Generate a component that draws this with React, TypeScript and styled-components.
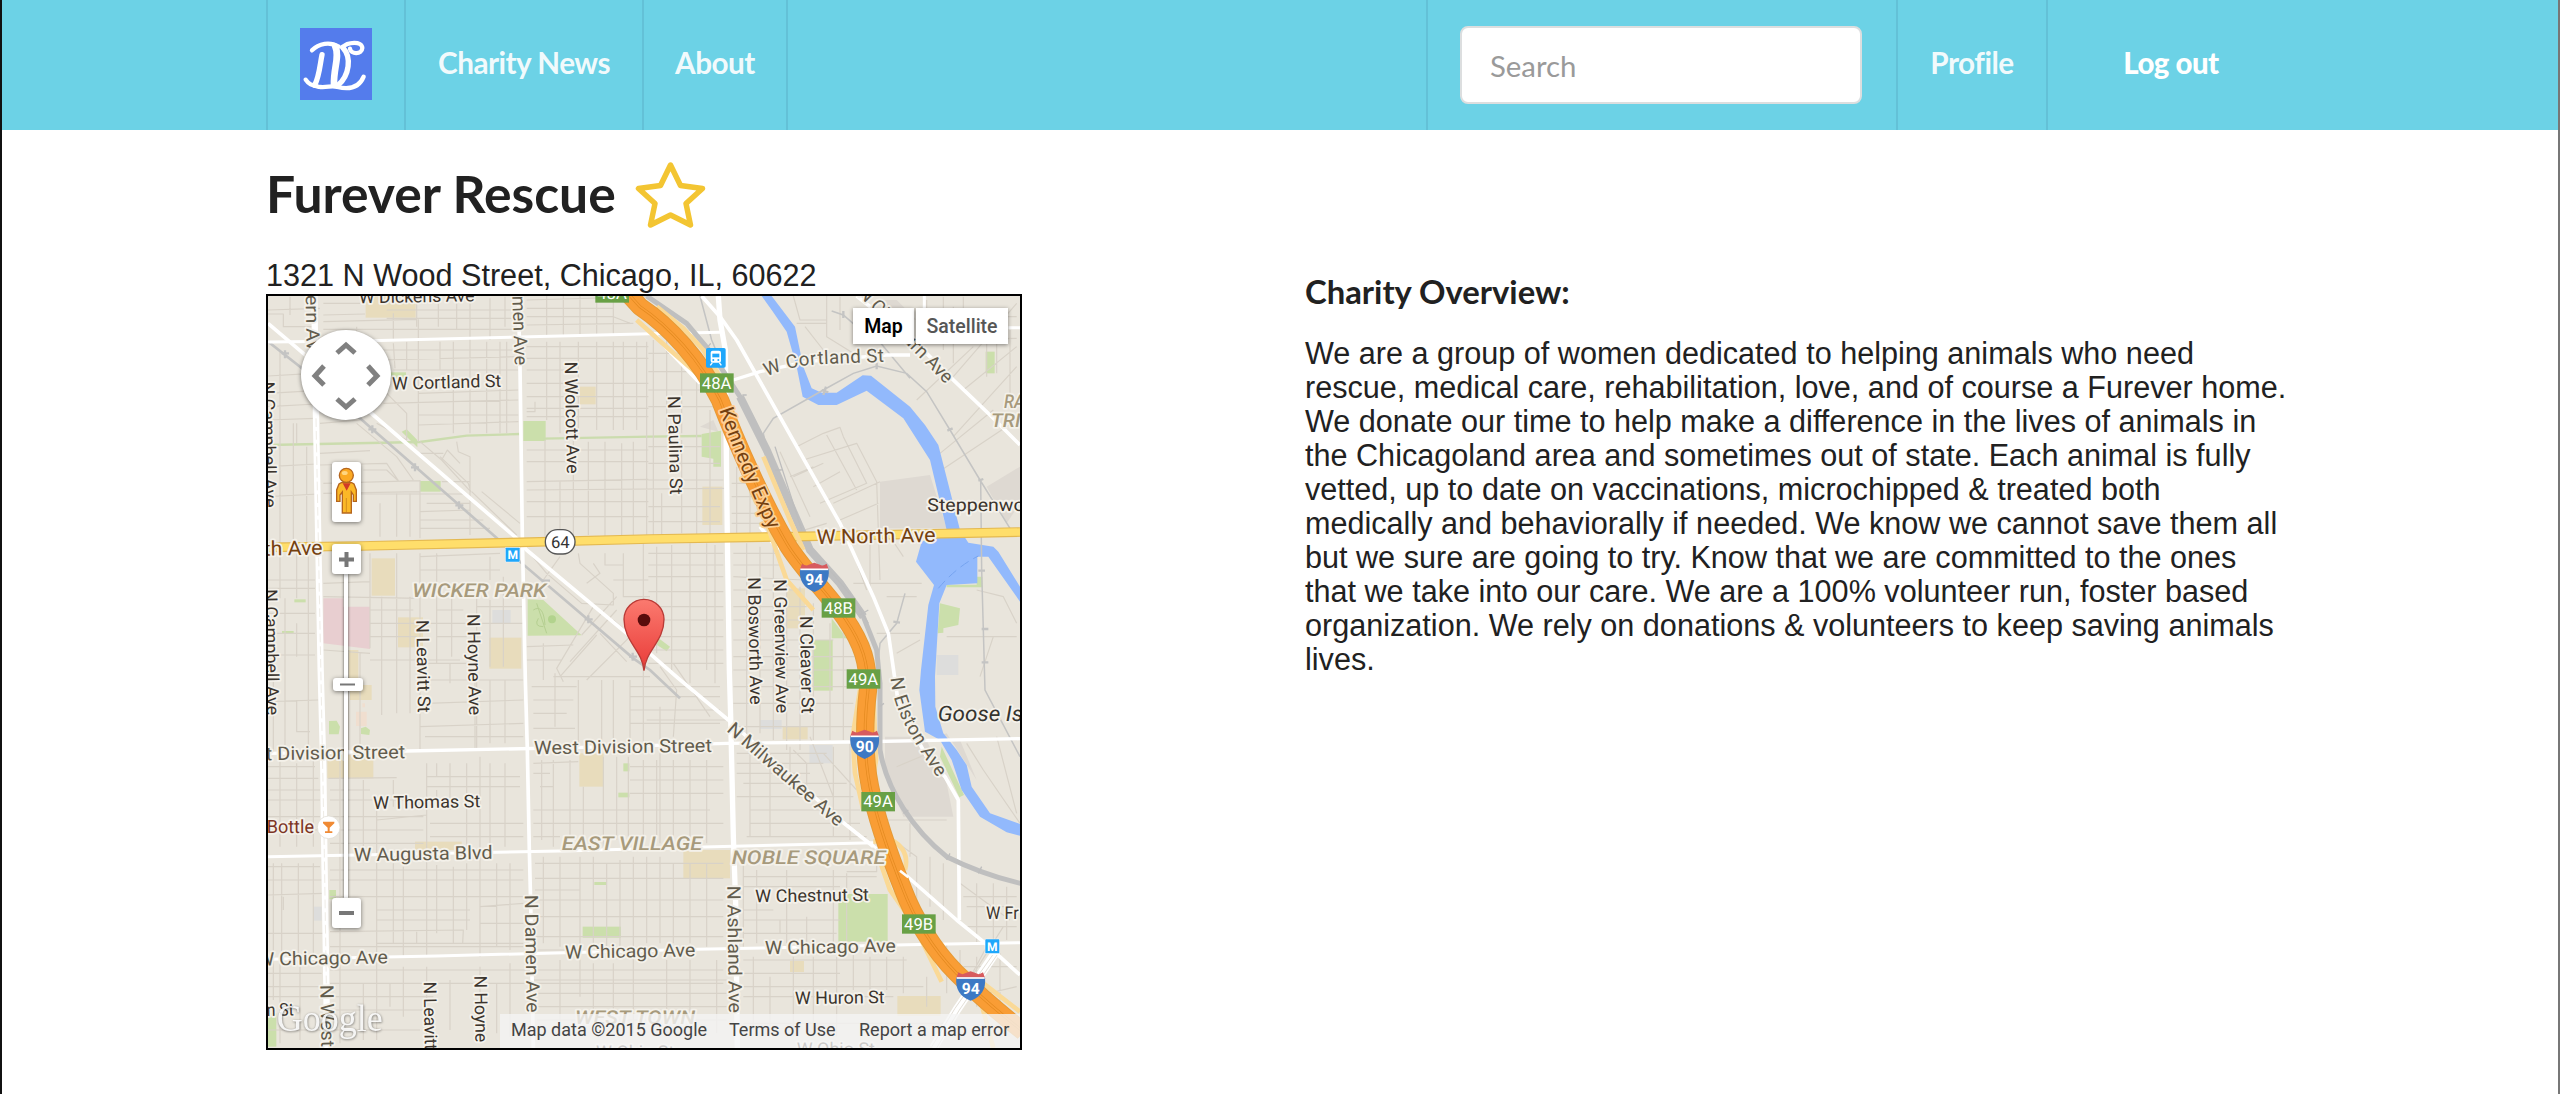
import React from 'react';
import styled, { createGlobalStyle } from 'styled-components';

const GlobalStyle = createGlobalStyle`
  * { box-sizing: border-box; }
  html, body { margin: 0; padding: 0; background: #fff; }
`;

const sans = `"Liberation Sans", Arial, sans-serif`;
const lato = `Lato, "Liberation Sans", sans-serif`;
const roboto = `Roboto, "Liberation Sans", sans-serif`;

const Page = styled.div`
  width: 2560px;
  height: 1094px;
  overflow: hidden;
  border-left: 2px solid #111;
  border-right: 2px solid #777;
  background: #fff;
  color: #212121;
`;
const NavBar = styled.nav`
  height: 130px;
  background: #6cd2e6;
  padding-left: 264px;
  display: flex;
  font-family: ${lato};
`;
const NavItem = styled.a<{ $w: number; $pad?: number; $bold?: boolean; $line?: 'left' | 'both' }>`
  width: ${p => p.$w}px;
  height: 130px;
  padding-bottom: ${p => p.$pad ?? 6}px;
  display: flex;
  align-items: center;
  justify-content: center;
  color: ${p => (p.$bold ? '#fff' : 'rgba(255,255,255,.92)')};
  font-size: ${p => (p.$bold ? 29.4 : 29.7)}px;
  font-weight: ${p => (p.$bold ? 900 : 700)};
  letter-spacing: -0.5px;
  white-space: nowrap;
  border-left: ${p => (p.$line ? '2px solid #63c1d7' : '0')};
  border-right: ${p => (p.$line === 'both' ? '2px solid #63c1d7' : '0')};
`;
const Spacer = styled.div`
  width: 638px;
`;
const SearchCell = styled.div`
  width: 470px;
  padding: 26px 0 0 32px;
  border-left: 2px solid #63c1d7;
`;
const SearchInput = styled.input`
  display: block;
  width: 402px;
  height: 78px;
  border: 2px solid #dcdedf;
  border-radius: 8px;
  padding: 0 28px;
  font-family: ${lato};
  font-size: 29.4px;
  background: #fff;
  outline: none;
  &::placeholder { color: #9a9a9a; opacity: 1; }
`;
const Content = styled.main`
  display: flex;
  padding-left: 264px;
`;
const LeftColumn = styled.section`
  width: 1039px;
`;
const RightColumn = styled.section`
  width: 1000px;
  padding-top: 142px;
`;
const TitleRow = styled.div`
  height: 128px;
  display: flex;
  padding-top: 31px;
`;
const Title = styled.h1`
  margin: 0;
  width: 369px;
  font: 700 51.6px/64px ${lato};
  letter-spacing: 0;
  white-space: nowrap;
`;
const Address = styled.div`
  height: 36px;
  font: 30.6px/34px ${sans};
  white-space: nowrap;
`;
const OverviewTitle = styled.h3`
  margin: 0 0 23px;
  font: 700 32.8px/40px ${lato};
`;
const Overview = styled.p`
  margin: 0;
  padding-top: 1px;
  font: 30.6px/34px ${sans};
  white-space: nowrap;
`;
const MapBox = styled.div`
  position: relative;
  width: 756px;
  height: 756px;
  border: 2px solid #000;
  overflow: hidden;
  background: #e9e5dc;
  font-family: ${roboto};
  & > svg:first-child { display: block; }
`;
const MapTypeBar = styled.div`
  position: absolute;
  right: 12px;
  top: 12px;
  display: flex;
  gap: 2px;
`;
const MapType = styled.button<{ $w: number; $active?: boolean }>`
  width: ${p => p.$w}px;
  height: 36px;
  padding: 1px 0 0;
  border: 0;
  background: #fff;
  box-shadow: 0 1px 4px rgba(0, 0, 0, 0.45);
  font: ${p => (p.$active ? 600 : 500)} 19.5px ${roboto};
  color: ${p => (p.$active ? '#000' : '#565656')};
`;
const PanPad = styled.div`
  position: absolute;
  left: 33px;
  top: 34px;
  width: 90px;
  height: 90px;
  border-radius: 50%;
  background: #fff;
  box-shadow: 0 1px 4px rgba(0, 0, 0, 0.5);
`;
const ControlBox = styled.div<{ $x: number; $y: number; $w: number; $h: number }>`
  position: absolute;
  left: ${p => p.$x}px;
  top: ${p => p.$y}px;
  width: ${p => p.$w}px;
  height: ${p => p.$h}px;
  border-radius: 3px;
  background: #fff;
  box-shadow: 0 1px 4px rgba(0, 0, 0, 0.5);
  display: flex;
  align-items: center;
  justify-content: center;
`;
const Track = styled.div`
  position: absolute;
  left: 76px;
  top: 278px;
  width: 4px;
  height: 324px;
  background: #fff;
  box-shadow: 0 0 3px rgba(0, 0, 0, 0.7);
`;
const Legal = styled.div`
  position: absolute;
  right: 0;
  bottom: 0;
  height: 34px;
  display: flex;
  background: rgba(245, 245, 245, 0.78);
  color: #444;
  font: 18px/32px ${roboto};
  white-space: nowrap;
`;
const LegalItem = styled.span<{ $w: number }>`
  width: ${p => p.$w}px;
  padding-left: 11px;
`;

/* Map geometry uses three drawing units per screen pixel. */
const minorRoads = `
M24 60L180 55M24 258L160 250M24 310L165 302M24 350L168 342M24 390L165 385M24 620L175 612M24 72H70V110H165M90 20V75M60 180V465M110 400V460M60 465V760M100 400V750M140 470V760M24 530L170 522
M190 75L315 72M190 95L470 88M380 60H775M380 85H770M190 40H300M190 118H775M470 20V110M535 25V110M590 20V118M630 20V430M690 25V150M735 20V110M475 88V455M400 70V150
M360 180H775M360 210L775 200M400 240H775M370 340L775 330M475 375H775M475 405L775 395M475 310L775 300M400 160L405 235M540 155V240M580 155V430M680 155V430M720 155V430M440 155V240M740 155V430
M290 125V110M180 490L330 482M180 525L380 520L415 572M290 400L410 500L460 570M310 540L380 540L412 570M300 390L180 400M350 400L440 450V370L360 290M190 580L480 572M190 610L480 605M360 640V740M410 610V740M300 612H610M450 610V740M480 570V745M540 500L625 580L632 605L545 510L562 480L600 520M590 455L595 485L630 500V735M480 455L545 510M480 490H550M545 575H630M500 640H630M480 665L630 660M480 690H670M480 715H690M635 605L770 735M665 605L780 700
M800 30L1165 20M800 55H1060M800 80H1060M860 18V135M910 18V135M960 18V135M1010 35V135M1060 25V135M1110 100L1060 80M800 105L1120 100
M800 170H1165M800 205H1165M800 240H955M955 155V420M1010 155V420M860 155V390M900 155V430M1060 155V420M1090 155V420M1130 155V420M1160 155V740M800 280H1165M800 320H1165M800 355H1165M800 380H1165
M800 480H1165M800 515H1165M800 575L1165 568M800 600L1400 595M800 635H1165M800 680H1165M855 450V740M900 575V740M940 450V740M985 455V735M1035 455V740M1085 460V735M1120 455V740M825 335V365H800
M24 870H165M24 895H165M60 785V925M110 785V925M145 785V1380M75 925V1380M110 1000V1100M24 970H165M24 1030H165M24 1095H165M40 1170V1390M24 1235L175 1230M110 1230V1325H150
M190 880L330 875M190 920L480 925M330 790V1075M365 920V1275M410 790V1270M450 920V1270M190 1080L330 1090M330 1110H600M265 1080V1380M300 1090V1380M330 960H460M330 1000H620M330 1040H470
M480 790V1380M530 790V1120M575 925V1100M530 960H610M530 1000H610M530 1040H620M480 1120H620M500 1170H790M500 1240L790 1230M570 1120V1180M645 1120V1380M690 1170V1360M735 1170V1360M480 1310L790 1300M495 1340H790M650 910V1380M690 800V870M730 860V1130M690 930V1130M480 800L720 790M480 840H720M650 950H790M650 1000H790
M810 790L860 850L965 940L1060 945V910L960 820L955 790M900 800L850 870M1000 820L1020 850L980 880M1035 790V825L1090 825V790M1090 800V920L1170 920M1060 870H1165M965 1035L1070 920M900 1160L1010 1035M1000 950L890 1135L910 1175M930 1115L1070 960M980 1170L1140 1010M1020 1030L1100 1115M1060 990L1160 1080M1110 950L1155 1010M800 1070L940 1065M800 1110H905M850 1060V1170M880 1160H1170
M815 1190H950M820 1230H940M820 1270H920M820 1315H945M885 1150V1310M955 1170V1370M1025 1170V1370M1060 1170V1370M1110 1170V1370M1110 1190H1380M1110 1220H1380M1110 1260H1380M1110 1300H1380M1150 1180V1360M1200 1250V1360M1240 1120L1350 1280M1200 1130L1250 1200L1240 1340M1160 1290H1400
M1180 150V735M1220 150V425M1265 155V430M1310 220V740M1350 360V740M1165 190H1310M1165 245H1330M1165 300H1370M1165 350H1390M1165 470H1380M1165 520H1380M1165 570H1390M1165 650H1380M1165 695H1380M1265 450V730M1205 610V735M1415 580H1480M1415 620H1500M1415 670H1520M1430 530V735M1470 560V735M1415 700H1530
M1150 760V1180M1190 770V1090M1235 765V1140M1290 760V1180M1340 760V1140M1365 765V1180M1165 790H1390M1165 825H1390M1165 860H1390M1165 905H1390M1165 950H1390M1165 990H1390M1165 1040H1390M1165 1080H1390M1165 1120H1390
M1420 790H1550M1420 825H1560M1420 860L1630 870M1420 900H1620M1420 950H1640M1420 990H1650M1420 1050H1720M1420 1100H1790M1420 1140H1790M1460 760V1380M1500 770V1330M1540 770V1350M1580 860V1380M1620 890V1380M1660 940V1350M1710 1000V1350M1750 1020V1350M1420 1190H1790M1420 1240H1780M1420 1310H1780
M1600 18L1620 90H1700M1635 110L1690 180M1700 18V140L1780 190M1740 20V120M1600 170L1640 220M1610 100H1700V60M2000 30V155M2050 20V180M2080 50V220M2110 20V160M1990 80H2270M2030 150L2270 145M2180 150V260M2210 150V250M2250 120V320M2080 260L2270 40M2110 300L2270 170M2080 440L2270 230M2040 490L2200 360M2030 550L2270 390M1970 330L2140 170
M1610 470L1690 430L1740 412L1750 440L1820 580L1680 640M1630 510L1790 460L1850 575L1860 870M1560 485L1650 680M1590 560L1660 530M1660 590L1740 545M1700 435L1790 600M1720 640L1860 575M1600 560L1690 520M1740 690L1855 640M1600 730L1700 700M1740 760L1860 730M1830 900V740M1890 740L1930 800M1780 880H1985M1780 790L1820 900M1850 1030H1980M1880 920H1970M2060 1040H2270M2150 900L2230 920L2270 1000M1910 1090L1980 1050M2030 1000L2020 1170M2200 1040L2160 1160
M24 1430H165M24 1465H175M24 1500H180M24 1530H180M60 1410V1670M110 1420V1670M160 1410V1670M24 1580H180M24 1620H180M24 1730H180M24 1770H185M24 1815L190 1810M24 1930H190M65 1720V2000M115 1720V2000M70 1820V1860M40 1720V2130M160 1720V2000
M205 1465L410 1463M210 1500H330M210 1530H500M240 1410V2000M310 1470V1680M350 1530V2110M400 1470V1550M210 1580H490M210 1620H490M210 1660H490M500 1420V2000M530 1420V1460M500 1460H780M500 1490H780M530 1500V1550M570 1420V1560M620 1420V1680M660 1400V2000M690 1420V1670M735 1420V1670M510 1600H790M510 1640H790M350 1590L500 1575
M210 1740H790M210 1770H790M210 1820H790M350 1860H630M350 1890H630M210 1925L610 1920L608 1960M350 1960H790M400 1720V1960M430 1730V2000M470 1925V1960M530 1725V1930M580 1730V1960M620 1720V1920M660 1700V1930M710 1720V1970M750 1720V1980M210 1970H790M660 1850L790 1840M660 1900H790
M820 1420L955 1415M820 1450H870M840 1490H880M820 1560H1350M820 1600H1390M845 1410V1650M880 1410V1670M930 1410V1660M970 1490V1660M1030 1400V1670M1070 1400V1650M1105 1400V1640M820 1640H900M1150 1410V1660M1190 1410V1650M1240 1410V1640M1290 1410V1660M1340 1410V1660M1110 1430H1390M1110 1470H1390M1110 1510H1390M1200 1390V1660
M825 1720H1390M825 1765H1390M825 1800H960M960 1700V2120M1000 1700V1970M1040 1720V1970M1080 1710V1970M1120 1700V2230M1160 1700V1960M1200 1700V1960M1240 1720V1960M1290 1720V1960M1340 1720V1970M825 1830H1390M825 1880H1390M825 1940H1390M825 1980H960M850 1700V1960M900 1700V1970
M24 2050H185M24 2090H185M24 2120H185M24 2220H185M60 2020V2260M120 2020V2250M210 2040H1390M210 2080H1390M240 2020V2260M350 2030V2250M390 2080V2150M310 2080V2250M210 2120H520M210 2160H500M210 2220H480M430 2030V2180M500 2030V2260M570 2070V2220M660 2030V2260M710 2080V2230M750 2020V2240M820 2070H1400M830 2110H1400M830 2150H1400M830 2190H1400M900 2010V2220M1000 2020V2220M1060 2020V2220M1220 2010V2230M1290 2010V2230M1370 2010V2230
M1430 1390H1700M1430 1420H1690M1430 1450H1650M1450 1480H1760M1430 1520H1780M1470 1560H1800M1470 1600H1800M1460 1640H1820M1470 1370V1640M1530 1390V1640M1590 1370V1500M1650 1340L1720 1520M1720 1370V1640M1600 1380L1640 1420V1500M1770 1350V1650M1690 1390L1790 1500
M1450 1700V1970M1490 1740V1960M1580 1740V1960M1640 1880V1980M1720 1740V1980M1760 1750V1980M1450 1760H1850M1450 1790H1740M1450 1860H1540M1450 1890H1740M1450 1930H1730M1560 1890V1930H1730M1760 1745H1850V1700M1450 2010H1940M1450 2050H1740M1450 2090H1990M1450 2120H1900M1450 2200H2050M1480 2000V2220M1530 2060V2220M1600 2000V2240M1660 2000V2240M1730 2000V2240M1780 1990V2100M1830 2000V2100M1880 2000V2100M1930 2000V2110M2000 2060V2150M2150 2000V2150
M1880 1590H2060M1900 1650L1970 1700V1880M1950 1600V1700M1920 1760V1850M2010 1700V1850M2050 1720V1890M2100 1780L2250 1890M2110 1820H2270M2120 1850L2260 1850M2150 1780V1960M2200 1780V1960M2240 1790V1950M2110 1910H2270M2060 1960V2110M2100 1980V2050M2220 1990V2150M2110 2030H2270M2100 2130L2270 2090M2180 1970L2110 2100L2230 1910M2210 1340L2270 1570M2120 1360L2170 1440L2280 1600M1910 1430L2030 1380
`;

const whiteRoads = [
  { d: 'M24 156L300 153 780 141 1170 131 1380 127', w: 9 },
  { d: 'M2245 113H2280M1993 18V60', w: 9 },
  { d: 'M24 100L130 190 340 375 770 745 800 780 1100 1030 1255 1165 1405 1290 1740 1590 1840 1670M1920 1740L2090 1890 2170 1955 2280 2055', w: 11 },
  { d: 'M775 18L780 230 787 740 796 1170 802 1380 808 1680 812 1840 820 2274', w: 11 },
  { d: 'M1420 270L1500 245 1640 215 1880 195H1950', w: 10 },
  { d: 'M1325 18L1380 80 1430 150 1740 700 1840 920 1885 1030 1905 1170 1915 1240 2000 1400 2055 1460 2095 1530 2098 1890', w: 11 },
  { d: 'M1790 18L1970 160 2075 265 2190 375 2280 465', w: 11 },
  { d: 'M24 1390L440 1383 940 1373 1400 1360 1770 1356 2280 1346', w: 10 },
  { d: 'M24 1700L330 1694 940 1682 1330 1671 1840 1658', w: 9 },
  { d: 'M24 2008L530 1998 1310 1978 1510 1974 1940 1964 2280 1958', w: 9 },
  { d: 'M163 18L168 380 175 760 182 1140 190 1440 193 1690 199 2080 201 2274', w: 19 },
  { d: 'M1375 18L1380 90 1396 180 1398 400 1402 740 1408 1140 1412 1280 1420 1640 1427 1840 1432 2274', w: 16 },
  { d: 'M1180 128L1225 180 1320 280M1500 710L1555 780', w: 11 },
  { d: 'M2205 1990L2090 2160 2020 2274', w: 26 },
];

const kennedy =
  'M1090 -5L1140 50C1230 110 1320 210 1380 330C1430 460 1510 640 1580 760C1620 830 1700 905 1755 985C1810 1065 1824 1120 1824 1200C1812 1300 1812 1400 1830 1490C1850 1590 1890 1700 1930 1800C1960 1880 2020 1980 2090 2050C2150 2110 2220 2170 2290 2225';
const rails =
  'M1160 18L1280 100 1355 190 1440 320 1520 480 1580 620 1650 780 1740 880 1810 980 1850 1080 1860 1180V1380C1880 1500 1960 1620 2060 1700Q2170 1755 2290 1782';

type Patch = [number, number, number, number];
const tan: Patch[] = [
  [317, 20, 150, 63], [335, 805, 70, 112], [414, 982, 75, 90], [688, 1043, 96, 93], [960, 290, 47, 53],
  [1327, 590, 60, 115], [1580, 895, 55, 120], [202, 1395, 138, 70], [958, 1390, 73, 100], [465, 1655, 140, 25],
  [265, 1080, 30, 110], [270, 1185, 65, 45], [1270, 1680, 140, 85], [1568, 1308, 75, 40], [1590, 2013, 42, 33], [1912, 2118, 130, 60],
];
const green: Patch[] = [
  [790, 393, 67, 60], [480, 573, 62, 32], [103, 928, 34, 9], [66, 1023, 35, 9], [2177, 185, 27, 65], [1658, 1050, 60, 152],
  [1735, 1812, 148, 143], [968, 1910, 115, 33], [24, 2170, 25, 100], [1090, 1420, 18, 24], [1075, 1508, 33, 14], [1003, 1776, 36, 9], [208, 1800, 20, 28], [380, 247, 58, 20],
];
const grey: Patch[] = [[697, 960, 55, 40], [1500, 1290, 65, 27], [1648, 1365, 70, 55], [160, 1850, 25, 42], [2030, 1095, 65, 60]];

type Kind = 'local' | 'main' | 'area' | 'gold' | 'place' | 'island';
const palette: Record<Kind, string> = { local: '#3b342d', main: '#625c4d', area: '#a79a7c', gold: '#74400f', place: '#7c3424', island: '#35342f' };
const sizes: Record<Kind, number> = { local: 53, main: 56, area: 57, gold: 61, place: 55, island: 64 };

const MapText = styled.text<{ $kind: Kind; $halo?: string }>`
  font-family: ${roboto};
  font-size: ${p => sizes[p.$kind]}px;
  font-style: ${p => (p.$kind === 'area' || p.$kind === 'island' ? 'italic' : 'normal')};
  font-weight: ${p => (p.$kind === 'area' ? 500 : 400)};
  fill: ${p => palette[p.$kind]};
  stroke: ${p => p.$halo ?? '#f4f1ea'};
  stroke-width: 11px;
  stroke-linejoin: round;
  paint-order: stroke;
  text-rendering: geometricPrecision;
`;
const SignText = styled.text<{ $fill?: string; $weight?: number; $size?: number }>`
  font-family: ${roboto};
  font-size: ${p => p.$size ?? 50}px;
  font-weight: ${p => p.$weight ?? 400};
  fill: ${p => p.$fill ?? '#fff'};
  text-anchor: middle;
  text-rendering: geometricPrecision;
`;
const Watermark = styled.text`
  font-family: "Liberation Serif", serif;
  font-size: 112px;
  fill: #fff;
  fill-opacity: 0.9;
  filter: drop-shadow(1px 2px 3px rgba(0, 0, 0, 0.55));
`;

type LabelData = [string, number, number, number, number, Kind];
const labels: LabelData[] = [
  ['W Dickens Ave', 297, 40, 347, -1, 'local'],
  ['ern Ave', 137, 14, 200, 89, 'main'],
  ['men Ave', 757, 18, 208, 88, 'main'],
  ['W Cortland St', 397, 299, 327, -1.5, 'local'],
  ['N Wolcott Ave', 914, 215, 336, 88.8, 'local'],
  ['N Campbell Ave', 6, 275, 378, 89, 'local'],
  ['N Campbell Ave', 14, 898, 378, 89, 'local'],
  ['W North Ave', -167, 800, 355, -1, 'gold'],
  ['WICKER PARK', 457, 920, 402, 0, 'area'],
  ['N Leavitt St', 469, 990, 278, 89, 'local'],
  ['N Hoyne Ave', 622, 972, 304, 89, 'local'],
  ['N Clybourn Ave', 1791, 12, 380, 45.5, 'main'],
  ['N Paulina St', 1223, 318, 296, 88.5, 'local'],
  ['W North Ave', 1670, 762, 357, -1, 'gold'],
  ['Steppenwo', 2002, 662, 292, 0, 'local'],
  ['RA', 2232, 353, 62, 0, 'area'],
  ['TRI', 2193, 412, 88, 0, 'area'],
  ['N Bosworth Ave', 1464, 862, 382, 89, 'local'],
  ['N Greenview Ave', 1542, 868, 402, 89, 'local'],
  ['N Cleaver St', 1620, 978, 293, 89, 'local'],
  ['N Milwaukee Ave', 1398, 1322, 442, 41, 'main'],
  ['N Ashland Ave', 1402, 1787, 382, 89.3, 'main'],
  ['West Division Street', 822, 1393, 534, -0.8, 'main'],
  ['West Division Street', -98, 1412, 534, -0.8, 'main'],
  ['W Thomas St', 340, 1557, 321, -1, 'local'],
  ['Bottle', 20, 1630, 142, 0, 'place'],
  ['W Augusta Blvd', 282, 1714, 416, -1, 'main'],
  ['EAST VILLAGE', 905, 1681, 422, 0, 'area'],
  ['NOBLE SQUARE', 1415, 1722, 462, 0, 'area'],
  ['W Chestnut St', 1486, 1837, 341, -0.8, 'local'],
  ['W Chicago Ave', -9, 2027, 393, -1, 'main'],
  ['W Chicago Ave', 915, 2006, 391, -1, 'main'],
  ['W Chicago Ave', 1515, 1993, 393, -1, 'main'],
  ['W Huron St', 1605, 2143, 269, -0.8, 'local'],
  ['W Fr', 2178, 1888, 98, 0, 'local'],
  ['N Damen Ave', 794, 1815, 353, 89, 'main'],
  ['N West', 181, 2085, 186, 89, 'main'],
  ['N Leavitt', 491, 2075, 205, 89, 'local'],
  ['N Hoyne', 643, 2057, 200, 89, 'local'],
  ['n St', 20, 2178, 82, -1, 'local'],
  ['WEST TOWN', 945, 2202, 360, 0, 'area'],
  ['W Ohio St', 1610, 2295, 235, 0, 'local'],
  ['W Ohio St', 1008, 2305, 235, 0, 'local'],
  ['Goose Is', 2033, 1292, 256, 0, 'island'],
];

const ExitSign = ({ x, y, t }: { x: number; y: number; t: string }) => (
  <g transform={`translate(${x} ${y})`}>
    <rect width="101" height="58" fill="#68a045" />
    <SignText x="50" y="46">{t}</SignText>
  </g>
);
const Shield = ({ x, y, t }: { x: number; y: number; t: string }) => (
  <g transform={`translate(${x} ${y})`}>
    <path d="M-37-43Q-25-34-17-40L0-46 17-40Q25-34 37-43L44-24H-44Z" fill="#d75b5e" />
    <path d="M-43-27H43Q48 24 0 42Q-48 24-43-27Z" fill="#3d79c4" />
    <path d="M-42-26H42" stroke="#fff" strokeWidth="5" />
    <SignText y="22" $weight={700} $size={47}>{t}</SignText>
  </g>
);
const Metro = ({ x, y }: { x: number; y: number }) => (
  <g transform={`translate(${x} ${y})`}>
    <rect x="-2" y="-2" width="46" height="46" rx="4" fill="#fff" opacity=".7" />
    <rect width="42" height="42" rx="2" fill="#1fa7fb" />
    <SignText x="21" y="34" $weight={700} $size={36}>M</SignText>
  </g>
);

const rect = (fill: string) => ([x, y, w, h]: Patch, i: number) => <rect key={fill + i} x={x} y={y} width={w} height={h} fill={fill} />;

const StreetMap = () => (
  <svg width="752" height="752" viewBox="24 18 2256 2256">
    <defs>
      <path id="cortland" d="M1520 260Q1590 226 1690 222L1880 215" />
      <path id="kennedyLabel" d="M1378 360Q1432 520 1528 724" />
      <path id="elston" d="M1892 1164C1900 1270 1960 1350 2040 1475" />
      <linearGradient id="pin" x1="0" y1="0" x2="0" y2="1">
        <stop offset="0" stopColor="#fb7a6f" />
        <stop offset="1" stopColor="#e93b38" />
      </linearGradient>
    </defs>
    <rect x="24" y="18" width="2256" height="2256" fill="#e9e5dc" />
    <path d="M1860 575L2010 555 2060 715H1860ZM1875 1340H1995L2060 1480 2080 1580H1930L1875 1440ZM2030 1340L2100 1350 2150 1470 2060 1330ZM2180 590L2280 530V640L2240 700ZM1860 30H1910L1970 90 1900 80ZM1320 410L1360 390 1375 425Z" fill="#ded9d2" />
    {tan.map(rect('#e8dcbc'))}
    {grey.map(rect('#dddddc'))}
    <path d="M190 925H250V950H330V1077L190 1060Z" fill="#e8ced0" />
    <path d="M288 1265H320V1308H288ZM307 1240H315V1252H307Z" fill="#f0decf" />
    {green.map(rect('#cbdfab'))}
    <path d="M803 928L850 930 965 1036 803 1037ZM425 425L440 418 472 450V472ZM1325 432L1383 422V530H1360V506L1325 500ZM2040 940L2100 955 2095 1005 2050 1015V1028L2033 1030ZM2150 860H2167V892H2060V884H2150ZM2045 1370L2112 1515 2098 1522 2040 1400ZM1190 1040L1230 1070 1220 1084 1183 1060ZM1715 985L1760 1045H1715ZM207 1293L230 1292 240 1310 236 1333H207ZM303 1315L317 1310 330 1320 328 1335 303 1332Z" fill="#cbdfab" />
    <path d="M24 465L480 456 620 437 780 432M850 446L1170 440 1325 438" fill="none" stroke="#cbdcae" strokeWidth="7" />
    <path d={minorRoads} fill="none" stroke="#d8d2c8" strokeWidth="3.5" strokeLinejoin="round" />
    <path d="M820 960Q850 940 855 1005M835 985Q820 1010 850 1010M830 940L860 1030" fill="none" stroke="#b5cf91" strokeWidth="3" />
    <circle cx="876" cy="988" r="12" fill="#b2d38d" />
    <path
      d="M1505 18H1535L1605 110 1630 230 1655 295 1685 308 1730 308 1808 256 1833 257 1950 350 1995 405 2035 465 2100 720 2125 758 2200 770 2215 785 2280 890V935L2185 800H2152V880L2060 885 2038 940 2025 1160 2026 1250 2050 1330 2090 1380 2120 1425 2135 1490 2190 1570 2280 1602V1637L2240 1627 2160 1580 2105 1500 2075 1410 2040 1350 1995 1325 1978 1200 1983 1140 2005 945 2022 885 1968 815 1985 755 2060 720 2010 510 1930 385 1820 302 1730 345 1675 345 1628 320 1610 230 1580 125 1535 60Z"
      fill="#92b9fc"
    />
    <path d="M2035 895Q2090 830 2155 798" fill="none" stroke="#76a4f0" strokeWidth="3" strokeDasharray="30 16" />
    <g fill="none" stroke="#c4c4c3">
      <path d="M24 155L120 230 300 385 740 770 780 815 1120 1105 1170 1140 1260 1225" strokeWidth="8" />
      <path d="M1520 480L1510 430 1540 385 1690 300 1780 250 1850 228 1940 250 2000 305 2070 420 2160 570 2250 715M2162 570L2165 840 2175 1200 2280 1400M1935 910L1910 1000 1860 1060 1852 1140M1715 63L1750 75 1790 110M1850 145L1950 265M1320 18L1355 150 1380 210" strokeWidth="4.5" />
      <path d="M65 190H87M325 418H349M453 532H477M586 646H610M846 872H870M974 988H998M1107 1100H1131M75 181V205M337 406V430M465 520V544M597 634V658M985 976V1000M1118 1088V1112M1685 300L1705 307M1698 290L1690 315M1850 218V238M2062 422L2078 415M2155 572L2170 567M1900 995L1920 998M2165 1017H2185M2165 1117H2185M2155 842H2175M1750 63V84" strokeWidth="7" />
    </g>
    <g fill="none" stroke="#fff" strokeLinejoin="round">
      {whiteRoads.map(r => <path key={r.d} d={r.d} strokeWidth={r.w} />)}
    </g>
    <path d="M168 385L193 1690 199 2080" fill="none" stroke="#efece6" strokeWidth="3" strokeDasharray="26 12" />
    <path d="M2198 1995L2085 2155 2013 2274M2211 1995L2098 2160 2030 2274" fill="none" stroke="#e3dfd7" strokeWidth="3" />
    <path d={rails} fill="none" stroke="#bfbfbf" strokeWidth="15" />
    <path d="M1440 320L1520 480 1580 620 1650 780 1740 880 1810 980" fill="none" stroke="#bfbfbf" strokeWidth="24" />
    <path d="M1545 470L1590 610 1625 720M1700 830L1780 925 1825 1000M1275 92L1290 108M1352 160L1340 175M1447 315H1460M1545 540H1565M1800 975L1825 960M1872 1240L1858 1250M1930 1570L1945 1560M2060 1710L2070 1690M2155 1750L2165 1730" fill="none" stroke="#bdbdbd" strokeWidth="4" />
    <g fill="none" strokeLinejoin="round">
      <path d="M24 772L300 768 780 757 1170 747 1600 740 2280 726" stroke="#e4b951" strokeWidth="29" />
      <path d="M24 772L300 768 780 757 1170 747 1600 740 2280 726" stroke="#ffde6b" strokeWidth="22" />
      <path d="M1130 90L1230 180 1310 250M1190 50L1270 115 1330 180 1380 260M1480 600L1520 700 1580 870 1660 960M1510 500L1590 690 1630 780M1800 1200L1778 1340 1785 1450 1810 1560M1840 1220L1848 1410 1836 1480M1840 1655L1895 1650Q1950 1680 1935 1740M1862 1720L1890 1800 1960 1900 2045 2075M2060 2010L2170 2080 2280 2165M2160 2125L2200 2274" stroke="#fad996" strokeWidth="14" />
      <path d={kennedy} stroke="#e59a36" strokeWidth="55" />
      <path d={kennedy} stroke="#f99d35" strokeWidth="49" />
      <path d={kennedy} stroke="#e38a20" strokeWidth="9" />
      <path d={kennedy} stroke="#f99d35" strokeWidth="5" />
    </g>
    <path d="M1740 1590L1850 1675M1920 1742L1945 1762" stroke="#fff" strokeWidth="8" />

    {labels.map(([t, x, y, w, r, k]) => (
      <MapText key={t + x} $kind={k} textLength={w} lengthAdjust="spacingAndGlyphs" transform={`translate(${x} ${y}) rotate(${r})`}>{t}</MapText>
    ))}
    <MapText $kind="main"><textPath href="#cortland" textLength="358">W Cortland St</textPath></MapText>
    <MapText $kind="gold" $halo="#fdcf94"><textPath href="#kennedyLabel" textLength="390">Kennedy Expy</textPath></MapText>
    <MapText $kind="main"><textPath href="#elston" textLength="334">N Elston Ave</textPath></MapText>

    <ExitSign x={1006} y={-20} t="48A" />
    <ExitSign x={1320} y={250} t="48A" />
    <ExitSign x={1685} y={925} t="48B" />
    <ExitSign x={1760} y={1138} t="49A" />
    <ExitSign x={1804} y={1506} t="49A" />
    <ExitSign x={1926} y={1873} t="49B" />
    <Shield x={1663} y={864} t="94" />
    <Shield x={1814} y={1365} t="90" />
    <Shield x={2132} y={2090} t="94" />
    <Metro x={737} y={773} />
    <Metro x={2176} y={1948} />
    <rect x="856" y="719" width="89" height="73" rx="36" fill="#fff" stroke="#555" strokeWidth="4" />
    <SignText x="901" y="774" $fill="#333" $size={50}>64</SignText>
    <g transform="translate(1338 174)">
      <rect width="59" height="59" rx="5" fill="#1fa7fb" />
      <path d="M20 8H39Q45 8 45 14V38Q45 44 39 44H20Q14 44 14 38V14Q14 8 20 8Z" fill="#fff" />
      <path d="M19 17H40V28H19Z" fill="#1fa7fb" />
      <circle cx="22" cy="36" r="3" fill="#1fa7fb" /><circle cx="37" cy="36" r="3" fill="#1fa7fb" />
      <path d="M19 44L13 52M40 44L46 52" stroke="#fff" strokeWidth="4" />
    </g>
    <circle cx="206" cy="1612" r="34" fill="#fff" stroke="#ddd9d0" strokeWidth="2" />
    <path d="M189 1595H223V1600L209 1613V1624H217V1629H195V1624H203V1613L189 1600Z" fill="#f08a34" />
    <path d="M1152 1142C1147 1080 1092 1055 1092 988A60 60 0 0 1 1212 988C1212 1055 1157 1080 1152 1142Z" fill="url(#pin)" stroke="#b93a36" strokeWidth="4" />
    <circle cx="1152" cy="990" r="19" fill="#590c0c" />
    <Watermark x="50" y="2224" textLength="318" lengthAdjust="spacingAndGlyphs">Google</Watermark>
  </svg>
);

const Logo = () => (
  <svg width="72" height="72" viewBox="0 0 216 216">
    <rect width="216" height="216" fill="#547cec" />
    <g fill="none" stroke="#fff" strokeLinecap="round" strokeLinejoin="round">
      <path d="M36 67C56 46 90 40 116 56" strokeWidth="13" />
      <path d="M106 56C120 84 100 122 102 170" strokeWidth="20" />
      <path d="M128 58C156 88 148 142 114 172" strokeWidth="16" />
      <path d="M128 58C142 42 186 38 187 60C186 80 152 80 150 62" strokeWidth="13" />
      <path d="M66 80C60 110 58 145 44 172" strokeWidth="16" />
      <path d="M17 155C28 172 40 172 60 177C84 179 94 172 112 177C150 186 178 178 191 146" strokeWidth="13" />
    </g>
  </svg>
);

const App = () => (
  <Page>
    <GlobalStyle />
    <NavBar>
      <NavItem $w={138} $pad={2} $line="left"><Logo /></NavItem>
      <NavItem $w={238} $line="left">Charity News</NavItem>
      <NavItem $w={146} $line="both">About</NavItem>
      <Spacer />
      <SearchCell><SearchInput placeholder="Search" /></SearchCell>
      <NavItem $w={150} $line="left">Profile</NavItem>
      <NavItem $w={248} $line="left" $bold>Log out</NavItem>
    </NavBar>
    <Content>
      <LeftColumn>
        <TitleRow>
          <Title>Furever Rescue</Title>
          <svg width="72" height="70" viewBox="0 0 72 70">
            <path d="M35.5 4L45.5 24.500 67.500 27.500 51 42.500 55.500 64 35.500 54 15.500 64 20 42.500 3.500 27.500 25.500 24.500Z" fill="none" stroke="#f3c532" strokeWidth="5.500" strokeLinejoin="round" />
          </svg>
        </TitleRow>
        <Address>1321 N Wood Street, Chicago, IL, 60622</Address>
        <MapBox>
          <StreetMap />
          <MapTypeBar>
            <MapType $w={61} $active>Map</MapType>
            <MapType $w={92}>Satellite</MapType>
          </MapTypeBar>
          <PanPad>
            <svg width="90" height="90" viewBox="0 0 90 90" fill="none" stroke="#808080" strokeWidth="5">
              <path d="M36 23L45 15 54 23M36 69L45 77 54 69M23 36L14 46 23 55M67 36L76 46 67 55" />
            </svg>
          </PanPad>
          <ControlBox $x={63.5} $y={165.5} $w={29} $h={60}>
            <svg width="29" height="60" viewBox="0 0 87 180">
              <path d="M28 62H59L66 66 73 84V118H64V99L58 90V153H31V90L24 99V118H14V84L21 66Z" fill="#fbb827" stroke="#b5651d" strokeWidth="4" />
              <path d="M43 108V150" stroke="#d58e1e" strokeWidth="3" />
              <path d="M32 64H56L44 86Z" fill="#d03a27" />
              <circle cx="43" cy="40" r="21" fill="#fba922" stroke="#b5651d" strokeWidth="4" />
              <ellipse cx="38" cy="33" rx="9" ry="6" fill="#ffd680" />
            </svg>
          </ControlBox>
          <Track />
          <ControlBox $x={63.5} $y={248} $w={29} $h={30}>
            <svg width="15" height="15" viewBox="0 0 15 15" stroke="#777" strokeWidth="4"><path d="M0 7.500H15M7.500 0V15" /></svg>
          </ControlBox>
          <ControlBox $x={64.5} $y={382} $w={30} $h={13}>
            <svg width="15" height="3" viewBox="0 0 15 3"><path d="M0 1.500H15" stroke="#777" strokeWidth="2" /></svg>
          </ControlBox>
          <ControlBox $x={63.5} $y={601.5} $w={29} $h={30}>
            <svg width="15" height="4" viewBox="0 0 15 4"><path d="M0 2H15" stroke="#777" strokeWidth="4" /></svg>
          </ControlBox>
          <Legal>
            <LegalItem $w={218}>Map data ©2015 Google</LegalItem>
            <LegalItem $w={130}>Terms of Use</LegalItem>
            <LegalItem $w={172}>Report a map error</LegalItem>
          </Legal>
        </MapBox>
      </LeftColumn>
      <RightColumn>
        <OverviewTitle>Charity Overview:</OverviewTitle>
        <Overview>
          We are a group of women dedicated to helping animals who need<br />
          rescue, medical care, rehabilitation, love, and of course a Furever home.<br />
          We donate our time to help make a difference in the lives of animals in<br />
          the Chicagoland area and sometimes out of state. Each animal is fully<br />
          vetted, up to date on vaccinations, microchipped &amp; treated both<br />
          medically and behaviorally if needed. We know we cannot save them all<br />
          but we sure are going to try. Know that we are committed to the ones<br />
          that we take into our care. We are a 100% volunteer run, foster based<br />
          organization. We rely on donations &amp; volunteers to keep saving animals<br />
          lives.
        </Overview>
      </RightColumn>
    </Content>
  </Page>
);

export default App;
